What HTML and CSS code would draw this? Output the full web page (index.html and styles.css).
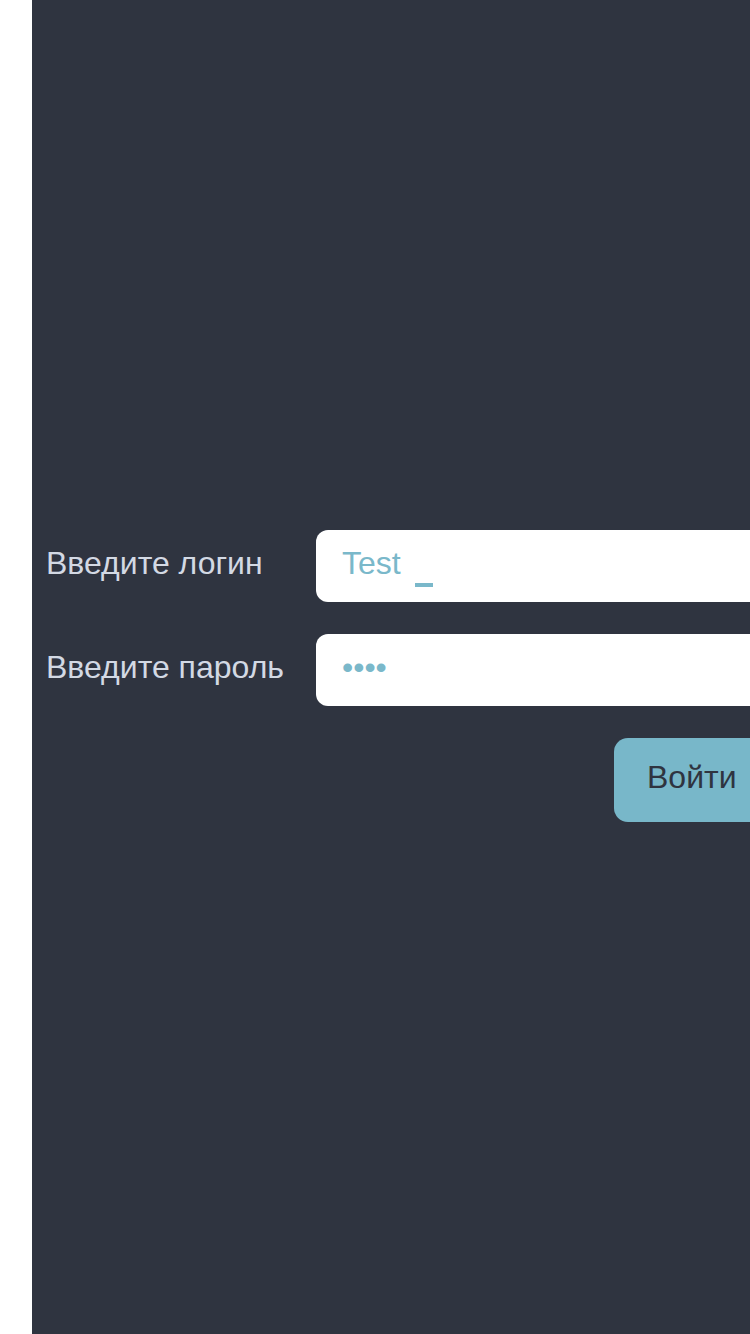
FILE: index.html
```html
<!DOCTYPE html>
<html lang="ru">
<head>
<meta charset="utf-8">
<link rel="stylesheet" href="styles.css">
</head>
<body>
<div class="panel">
  <form class="form">
    <label class="label">Введите логин</label>
    <div class="input"><span class="value">Test</span><span class="cursor"></span></div>
    <label class="label">Введите пароль</label>
    <div class="input"><span class="dots">••••</span></div>
    <div></div>
    <div class="actions"><button type="button" class="btn">Войти</button></div>
  </form>
</div>
</body>
</html>
```
FILE: styles.css
```css
html, body {
  margin: 0;
  padding: 0;
  background: #ffffff;
  overflow: hidden;
  height: 1334px;
  width: 750px;
}
.panel {
  margin-left: 32px;
  width: 1000px;
  height: 1334px;
  background: #2f3440;
  box-sizing: border-box;
  padding-top: 530px;
  padding-left: 14px;
  font-family: "Liberation Sans", Arial, sans-serif;
}
.form {
  display: grid;
  grid-template-columns: 270px 600px;
  row-gap: 32px;
  align-items: center;
  margin: 0;
}
.label {
  color: #d3d9e4;
  font-size: 32px;
  line-height: 36px;
  margin-top: -6px;
}
.input {
  height: 72px;
  background: #ffffff;
  border-radius: 12px;
  box-sizing: border-box;
  padding-left: 26px;
  display: flex;
  align-items: center;
  color: #7ab8ca;
  font-size: 32px;
}
.value {
  line-height: 36px;
  margin-top: -6px;
}
.cursor {
  width: 18px;
  height: 4px;
  background: #7ab8ca;
  margin-left: 14px;
  margin-top: 38px;
}
.dots {
  font-size: 32px;
  line-height: 36px;
  margin-top: -6px;
}
.actions {
  padding-left: 298px;
}
.btn {
  height: 84px;
  width: 200px;
  border: none;
  border-radius: 14px;
  background: #78b7c9;
  color: #2f3440;
  font-family: "Liberation Sans", Arial, sans-serif;
  font-size: 32px;
  text-align: left;
  padding: 0 0 5px 33px;
}
```
